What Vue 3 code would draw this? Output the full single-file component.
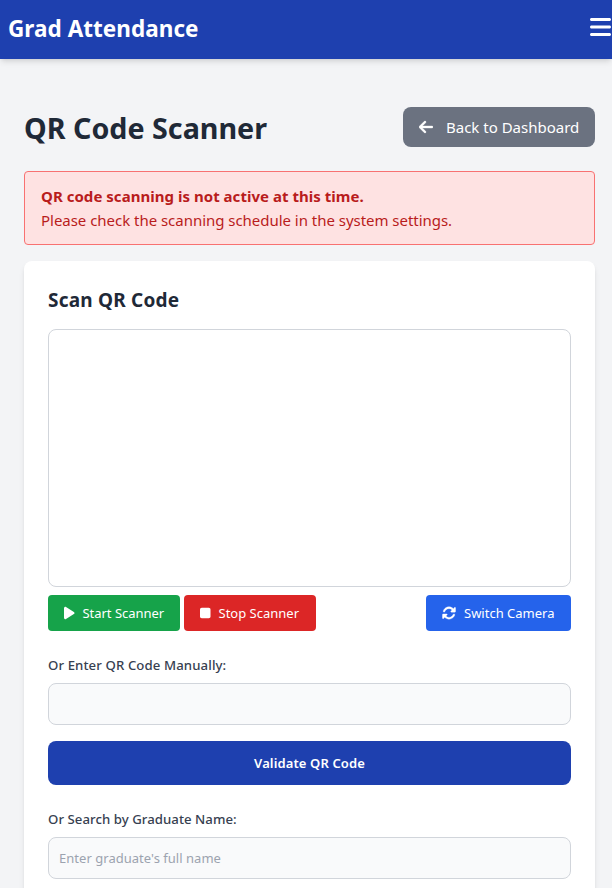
<script setup>
import { ref } from 'vue'

const manualCode = ref('')
const graduateName = ref('')
</script>

<template>
  <div class="page">
    <header class="topbar">
      <div class="brand">Grad Attendance</div>
      <button class="menu" type="button" aria-label="Menu">
        <svg class="icon-menu" viewBox="0 0 448 512" fill="currentColor"><path d="M0 96C0 78.300 14.300 64 32 64H416c17.700 0 32 14.300 32 32s-14.300 32-32 32H32C14.300 128 0 113.700 0 96zM0 256c0-17.700 14.300-32 32-32H416c17.700 0 32 14.300 32 32s-14.300 32-32 32H32c-17.700 0-32-14.300-32-32zM448 416c0 17.700-14.300 32-32 32H32c-17.700 0-32-14.300-32-32s14.300-32 32-32H416c17.700 0 32 14.300 32 32z" /></svg>
      </button>
    </header>

    <main class="content">
      <div class="heading">
        <h1 class="title">QR Code Scanner</h1>
        <button class="back" type="button">
          <svg class="icon-back" viewBox="0 0 448 512" fill="currentColor"><path d="M9.400 233.400c-12.500 12.500-12.500 32.800 0 45.300l160 160c12.500 12.500 32.800 12.500 45.300 0s12.500-32.800 0-45.300L109.200 288 416 288c17.700 0 32-14.300 32-32s-14.300-32-32-32l-306.700 0L214.600 118.600c12.500-12.500 12.500-32.800 0-45.300s-32.800-12.500-45.300 0l-160 160z" /></svg>
          <span>Back to Dashboard</span>
        </button>
      </div>

      <div class="alert" role="alert">
        <p class="alert-title">QR code scanning is not active at this time.</p>
        <p class="alert-text">Please check the scanning schedule in the system settings.</p>
      </div>

      <section class="card">
        <h2 class="subtitle">Scan QR Code</h2>
        <div class="viewport"></div>
        <div class="controls">
          <div class="group">
            <button class="btn start" type="button">
              <svg class="icon-narrow" viewBox="0 0 384 512" fill="currentColor"><path d="M73 39c-14.800-9.100-33.400-9.400-48.500-.9S0 62.600 0 80V432c0 17.400 9.400 33.400 24.500 41.900s33.700 8.100 48.500-.9L361 297c14.300-8.700 23-24.200 23-41s-8.700-32.200-23-41L73 39z" /></svg>
              <span>Start Scanner</span>
            </button>
            <button class="btn stop" type="button">
              <svg class="icon-narrow" viewBox="0 0 384 512" fill="currentColor"><path d="M0 128C0 92.700 28.700 64 64 64H320c35.300 0 64 28.700 64 64V384c0 35.300-28.700 64-64 64H64c-35.300 0-64-28.700-64-64V128z" /></svg>
              <span>Stop Scanner</span>
            </button>
          </div>
          <button class="btn switch" type="button">
            <svg class="icon-wide" viewBox="0 0 512 512" fill="currentColor"><path d="M142.900 142.900c62.200-62.200 162.700-62.500 225.300-1L327 183c-6.900 6.900-8.900 17.200-5.200 26.200s12.500 14.800 22.200 14.800H472c13.300 0 24-10.700 24-24V72c0-9.700-5.800-18.500-14.800-22.200s-19.300-1.700-26.200 5.200L413.400 96.600c-87.600-86.500-228.700-86.200-315.800 1C73.200 122 55.600 150.700 44.800 181.400c-5.900 16.700 2.900 34.900 19.500 40.800s34.900-2.900 40.800-19.500c7.700-21.800 20.200-42.300 37.800-59.800zM16 312V440c0 9.700 5.800 18.500 14.800 22.200s19.300 1.700 26.200-5.200l41.600-41.600c87.600 86.500 228.700 86.200 315.800-1c24.400-24.400 42.100-53.100 52.900-83.700c5.900-16.700-2.900-34.900-19.500-40.800s-34.900 2.900-40.800 19.500c-7.700 21.800-20.200 42.300-37.800 59.800c-62.200 62.200-162.700 62.500-225.300 1L185 329c6.900-6.900 8.900-17.200 5.200-26.200s-12.500-14.800-22.200-14.800H40c-13.300 0-24 10.700-24 24z" /></svg>
            <span>Switch Camera</span>
          </button>
        </div>

        <label class="label label-code" for="code">Or Enter QR Code Manually:</label>
        <input id="code" v-model="manualCode" class="field" type="text" />
        <button class="validate" type="button">Validate QR Code</button>

        <label class="label" for="name">Or Search by Graduate Name:</label>
        <input id="name" v-model="graduateName" class="field" type="text" placeholder="Enter graduate's full name" />
      </section>
    </main>
  </div>
</template>

<style>
body {
  margin: 0;
  background: #f3f4f6;
  overflow: hidden;
}
</style>

<style scoped>
.page {
  height: 888px;
  overflow: hidden;
  font-family: "Noto Sans", "Open Sans", sans-serif;
  font-size: 15px;
  line-height: 24px;
  color: #1f2937;
  background: #f3f4f6;
}

.page *,
.page *::before {
  box-sizing: border-box;
}

h1, h2, p {
  margin: 0;
}

button {
  display: flex;
  align-items: center;
  margin: 0;
  padding: 0;
  border: 0;
  font: inherit;
  color: #fff;
  white-space: nowrap;
}

svg {
  display: block;
  flex: none;
}

.topbar {
  display: flex;
  justify-content: space-between;
  align-items: center;
  height: 59px;
  padding: 0 1px 0 8px;
  background: #1e40af;
  color: #fff;
  box-shadow: 0 4px 6px -1px rgba(0, 0, 0, 0.1), 0 2px 4px -2px rgba(0, 0, 0, 0.1);
}

.brand {
  font-size: 22.5px;
  font-weight: 700;
  line-height: 32px;
  letter-spacing: 0.04px;
  padding-bottom: 2px;
}

.menu {
  background: transparent;
  padding-bottom: 5px;
}

.icon-menu {
  width: 21px;
  height: 24px;
}

.content {
  padding: 48px 17px 0 24px;
}

.heading {
  display: flex;
  justify-content: space-between;
  align-items: center;
  height: 40px;
  margin-bottom: 24px;
}

.title {
  padding-top: 2px;
  font-size: 28.7px;
  font-weight: 700;
  line-height: 36px;
}

.back {
  width: 192px;
  height: 40px;
  padding-left: 16px;
  gap: 13px;
  border-radius: 8px;
  background: #6b7280;
}

.icon-back {
  width: 14px;
  height: 16px;
}

.icon-back path,
.icon-wide path {
  stroke: currentColor;
  stroke-width: 12px;
}

.alert {
  height: 74px;
  padding: 12px 16px;
  border: 1px solid #f87171;
  border-radius: 4px;
  background: #fee2e2;
  color: #b91c1c;
}

.alert-title {
  font-weight: 700;
  letter-spacing: 0.03px;
}

.alert-text {
  letter-spacing: -0.03px;
}

.card {
  height: 700px;
  margin-top: 16px;
  padding: 25px 24px 24px;
  border-radius: 8px;
  background: #fff;
  box-shadow: 0 4px 6px -1px rgba(0, 0, 0, 0.1), 0 2px 4px -2px rgba(0, 0, 0, 0.1);
}

.subtitle {
  margin-bottom: 15px;
  font-size: 19px;
  font-weight: 700;
  line-height: 28px;
  letter-spacing: 0.2px;
}

.viewport {
  height: 258px;
  border: 1px solid #d1d5db;
  border-radius: 8px;
}

.controls {
  display: flex;
  justify-content: space-between;
  margin-top: 8px;
}

.group {
  display: flex;
  gap: 4px;
}

.btn {
  height: 36px;
  padding-left: 16px;
  border-radius: 4px;
  font-size: 13px;
  line-height: 20px;
}

.start,
.stop {
  width: 132px;
  gap: 8px;
}

.start {
  background: #16a34a;
  letter-spacing: -0.03px;
}

.stop {
  background: #dc2626;
}

.switch {
  width: 145px;
  gap: 8px;
  background: #2563eb;
}

.icon-narrow {
  width: 10.5px;
  height: 14px;
}

.icon-wide {
  width: 14px;
  height: 14px;
}

.label {
  display: block;
  margin: 24px 0 8px;
  font-size: 13.2px;
  font-weight: 500;
  line-height: 20px;
  letter-spacing: 0.05px;
  color: #374151;
}

.label-code {
  letter-spacing: 0.1px;
}

.field {
  display: block;
  width: 100%;
  height: 42px;
  margin: 0;
  padding: 0 10px;
  border: 1px solid #d1d5db;
  border-radius: 8px;
  outline: 0;
  background: #f9fafb;
  font-family: inherit;
  font-size: 13px;
  letter-spacing: 0.03px;
  color: #111827;
}

.field::placeholder {
  color: #9ca3af;
  opacity: 1;
}

.validate {
  justify-content: center;
  width: 100%;
  height: 44px;
  margin-top: 16px;
  border-radius: 8px;
  background: #1e40af;
  font-size: 13px;
  font-weight: 600;
  letter-spacing: 0.12px;
}
</style>
